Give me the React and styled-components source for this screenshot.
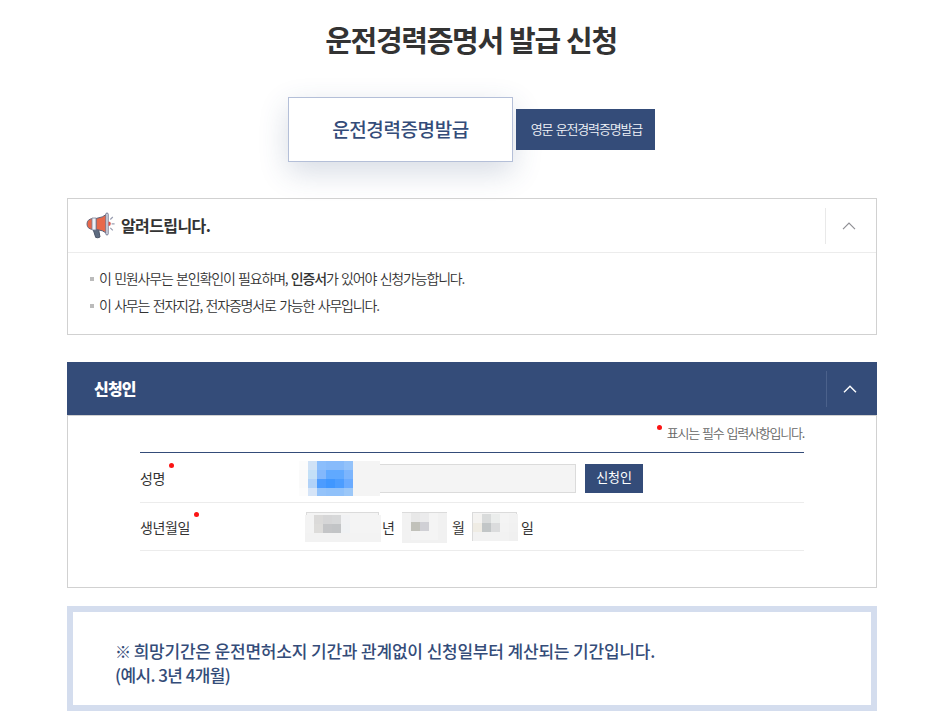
import React from "react";
import styled, { ThemeProvider, createGlobalStyle } from "styled-components";

const theme = {
  colors: {
    navy: "#344c79",
    line: "#d1d1d1",
    lightLine: "#ececec",
    text: "#333",
    red: "#fb1414",
  },
};

const nameMosaic = {
  cols: "9px 9px 9px 9px 9px 9px 27px",
  rows: "9px 9px 9px 8px",
  cells: [
    ["#fcfcfc", "#d0e2f6", "#8bbefc", "#87bbfb", "#87bbfb", "#93c2fa", "#f4f4f4"],
    ["#fafafa", "#c3e0f7", "#83b8fc", "#60a9ff", "#60a9ff", "#7cb5fd", "#f4f4f4"],
    ["#fafafa", "#b1d2f8", "#4c9cff", "#4097ff", "#4c9dff", "#6aabff", "#f4f4f4"],
    ["#fcfcfc", "#d5e4f7", "#94c3fa", "#90c1fa", "#90c1fa", "#9bc7f8", "#f4f4f4"],
  ],
};

const yearMosaic = {
  cols: "9px 9px 9px 9px 9px 31px",
  rows: "9px 9px 9px",
  cells: [
    ["#f3f3f3", "#dbdad9", "#d6d6d7", "#d7d8d9", "#f1f2f4", "#f4f4f4"],
    ["#f3f3f3", "#dddcda", "#c4c5c7", "#c2c4c6", "#f0f2f4", "#f4f4f4"],
    ["#f2f2f2", "#f2f2f2", "#f2f2f2", "#f2f2f2", "#f2f2f2", "#f3f3f3"],
  ],
};

const monthMosaic = {
  cols: "9px 9px 9px 9px 9px",
  rows: "9px 9px 9px 3px",
  cells: [
    ["#f2f2f2", "#e8e8e8", "#ebebec", "#f4f4f4", "#f1f1f1"],
    ["#f2f2f2", "#c1c1ba", "#d0d0d5", "#f4f4f4", "#f1f1f1"],
    ["#f2f2f2", "#f4f4f4", "#f4f4f4", "#f4f4f4", "#f1f1f1"],
    ["#f1f1f1", "#f1f1f1", "#f1f1f1", "#f1f1f1", "#f1f1f1"],
  ],
};

const dayMosaic = {
  cols: "9px 9px 9px 9px 9px",
  rows: "9px 9px 9px",
  cells: [
    ["#f4f3f1", "#d9dbdb", "#ebedec", "#f4f4f4", "#f2f2f2"],
    ["#efece4", "#c2c6c7", "#dbdcdd", "#f3f3f3", "#f1f1f1"],
    ["#f2f2f2", "#f2f2f2", "#f2f2f2", "#f2f2f2", "#f0f0f0"],
  ],
};

const Mosaic = ({ data, left, top }) => (
  <MosaicGrid $cols={data.cols} $rows={data.rows} $left={left} $top={top}>
    {data.cells.flat().map((color, i) => (
      <i key={i} style={{ background: color }} />
    ))}
  </MosaicGrid>
);

const Chevron = ({ color, width = 1 }) => (
  <svg width="14" height="8" viewBox="0 0 14 8" fill="none">
    <path d="M1 7.2 L7 1.2 L13 7.2" stroke={color} strokeWidth={width} />
  </svg>
);

const Megaphone = () => (
  <svg width="30" height="28" viewBox="0 0 30 28" strokeLinejoin="round">
    <path d="M7 17 h5.5 l1.5 8 q-2 1.4 -4.3 .4 z" fill="#5d6b80" stroke="#4b5468" />
    <path d="M7 6.5 Q1 7 1 12 Q1 17 7 17.5 z" fill="#e8684a" stroke="#67677c" />
    <path d="M10 6.5 Q17 5.5 21 2 V21.500 Q17 18 10 17.500 z" fill="#e8684a" stroke="#5d6076" />
    <rect x="6" y="6" width="4" height="12" fill="#eef0f6" stroke="#7a8096" strokeWidth=".8" />
    <rect x="19.800" y="1" width="2.400" height="22" rx="1.200" fill="#dfe2ec" stroke="#6a6f88" strokeWidth=".9" />
    <path d="M22.500 9.500 q2.300 0 2.300 2.300 t-2.300 2.300 z" fill="#d9534a" />
    <path d="M24.300 7.500 L26.800 5 M25.600 11.800 H28.600 M24.300 15.800 L26.800 18.300" stroke="#9a9eb0" strokeWidth="1.200" fill="none" />
  </svg>
);

const App = () => {
  return (
    <ThemeProvider theme={theme}>
      <GlobalStyle />
      <Page>
        <Title>운전경력증명서 발급 신청</Title>
        <Tabs>
          <ActiveTab>운전경력증명발급</ActiveTab>
          <Tab>영문 운전경력증명발급</Tab>
        </Tabs>

        <Notice>
          <NoticeHead>
            <Megaphone />
            <NoticeTitle>알려드립니다.</NoticeTitle>
            <Toggle $line="#e9e9e9">
              <Chevron color="#8f8f94" width={1.2} />
            </Toggle>
          </NoticeHead>
          <NoticeList>
            <NoticeItem>
              이 민원사무는 본인확인이 필요하며, <b>인증서</b>가 있어야 신청가능합니다.
            </NoticeItem>
            <NoticeItem>
              이 사무는 전자지갑, 전자증명서로 가능한 사무입니다.
            </NoticeItem>
          </NoticeList>
        </Notice>

        <SectionHead>
          <SectionTitle>신청인</SectionTitle>
          <Toggle $line="#4b618b">
            <Chevron color="#fff" width={1.4} />
          </Toggle>
        </SectionHead>
        <SectionBody>
          <Required>
            <Dot />
            표시는 필수 입력사항입니다.
          </Required>
          <Form>
            <Row $height={50}>
              <Label>
                성명
                <Dot />
              </Label>
              <Field $width={271} $drop={2}>
                <Mosaic data={nameMosaic} left={-7} top={-4} />
              </Field>
              <Button>신청인</Button>
            </Row>
            <Row $height={48}>
              <Label>
                생년월일
                <Dot />
              </Label>
              <Field $width={73} $shift={1}>
                <Mosaic data={yearMosaic} left={-2} top={2} />
              </Field>
              <Unit $left={3} $width={20}>년</Unit>
              <Field $width={45}>
                <Mosaic data={monthMosaic} left={-1} top={0} />
              </Field>
              <Unit $left={5} $width={20}>월</Unit>
              <Field $width={45}>
                <Mosaic data={dayMosaic} left={0} top={1} />
              </Field>
              <Unit $left={4} $width={20}>일</Unit>
            </Row>
          </Form>
        </SectionBody>

        <Guide>
          <GuideLine $spacing="-0.23px">
            <Mark>※</Mark> 희망기간은 운전면허소지 기간과 관계없이 신청일부터 계산되는 기간입니다.
          </GuideLine>
          <GuideLine $spacing="-0.65px">(예시. 3년 4개월)</GuideLine>
        </Guide>
      </Page>
    </ThemeProvider>
  );
};

export default App;

const GlobalStyle = createGlobalStyle`
  * {
    box-sizing: border-box;
    margin: 0;
    padding: 0;
  }

  body {
    overflow: hidden;
    background: #fff;
    color: ${theme.colors.text};
    font-family: "Noto Sans CJK KR", sans-serif;
  }

  svg {
    display: block;
    flex: none;
  }
`;

const Page = styled.div`
  display: flex;
  flex-direction: column;
  width: 810px;
  height: 722px;
  margin-left: 67px;
  padding-top: 17px;
`;

const Title = styled.h1`
  height: 80px;
  padding-right: 2px;
  line-height: 44px;
  text-align: center;
  font-size: 29px;
  font-weight: 700;
  letter-spacing: -1.3px;
  word-spacing: 1px;
`;

const Tabs = styled.div`
  display: flex;
  justify-content: center;
  align-items: center;
  gap: 3px;
  height: 65px;
  padding-right: 1px;
`;

const Tab = styled.button`
  width: 139px;
  height: 41px;
  padding: 0 0 2px 2px;
  border: none;
  background: ${({ theme }) => theme.colors.navy};
  color: #f2f4f8;
  font-family: inherit;
  font-size: 13px;
  font-weight: 350;
  letter-spacing: -1.15px;
  word-spacing: 1.5px;
  white-space: nowrap;
`;

const ActiveTab = styled(Tab)`
  width: 225px;
  height: 65px;
  padding: 0 0 2px;
  border: 1px solid #b4bfd8;
  background: #fff;
  box-shadow: 0 10px 30px rgba(52, 76, 121, 0.2);
  color: ${({ theme }) => theme.colors.navy};
  font-size: 19px;
  font-weight: 500;
  letter-spacing: -0.4px;
`;

const Notice = styled.section`
  height: 137px;
  margin-top: 36px;
  border: 1px solid ${({ theme }) => theme.colors.line};
`;

const NoticeHead = styled.div`
  display: flex;
  align-items: center;
  height: 54px;
  padding-left: 18px;
  border-bottom: 1px solid ${({ theme }) => theme.colors.lightLine};
`;

const NoticeTitle = styled.h2`
  padding: 0 0 2px 5px;
  font-size: 16px;
  font-weight: 700;
  letter-spacing: -0.6px;
`;

const Toggle = styled.div`
  display: flex;
  justify-content: center;
  align-items: center;
  width: 51px;
  height: 36px;
  margin-left: auto;
  padding-right: 5px;
  border-left: 1px solid ${({ $line }) => $line};
`;

const NoticeList = styled.ul`
  padding: 12px 22px;
  list-style: none;
`;

const NoticeItem = styled.li`
  height: 27px;
  line-height: 27px;
  font-size: 14px;
  font-weight: 350;
  letter-spacing: -1.18px;
  word-spacing: 1.5px;
  white-space: nowrap;

  b {
    font-weight: 500;
  }

  &::before {
    content: "";
    display: inline-block;
    width: 4px;
    height: 4px;
    margin-right: 5px;
    background: #bbb;
    vertical-align: 3px;
  }
`;

const SectionHead = styled.div`
  display: flex;
  align-items: center;
  flex: none;
  height: 53px;
  margin-top: 27px;
  padding-left: 27px;
  background: ${({ theme }) => theme.colors.navy};
`;

const SectionTitle = styled.h2`
  padding-bottom: 2px;
  color: #fff;
  font-size: 16px;
  font-weight: 900;
  letter-spacing: -0.8px;
`;

const SectionBody = styled.div`
  height: 173px;
  padding: 0 72px;
  border: 1px solid ${({ theme }) => theme.colors.line};
`;

const Dot = styled.i`
  flex: none;
  width: 5px;
  height: 5px;
  border-radius: 50%;
  background: ${({ theme }) => theme.colors.red};
`;

const Required = styled.p`
  display: flex;
  justify-content: flex-end;
  height: 36px;
  line-height: 34px;
  color: #666;
  font-size: 13px;
  font-weight: 350;
  letter-spacing: -1.2px;
  word-spacing: 1.2px;

  ${Dot} {
    margin: 9px 5px 0 0;
  }
`;

const Form = styled.div`
  border-top: 1px solid ${({ theme }) => theme.colors.navy};
`;

const Row = styled.div`
  display: flex;
  align-items: center;
  height: ${({ $height }) => $height}px;
  border-bottom: 1px solid ${({ theme }) => theme.colors.lightLine};
`;

const Label = styled.div`
  display: flex;
  width: 165px;
  font-size: 14px;
  letter-spacing: -0.4px;
  line-height: 20px;

  ${Dot} {
    margin: -5px 0 0 4px;
  }
`;

const Field = styled.div`
  position: relative;
  width: ${({ $width }) => $width}px;
  height: 29px;
  margin-top: ${({ $drop = 0 }) => $drop}px;
  margin-left: ${({ $shift = 0 }) => $shift}px;
  border: 1px solid #dbdbdb;
  background: #f4f4f4;
`;

const MosaicGrid = styled.div`
  position: absolute;
  left: ${({ $left }) => $left}px;
  top: ${({ $top }) => $top}px;
  display: grid;
  grid-template-columns: ${({ $cols }) => $cols};
  grid-template-rows: ${({ $rows }) => $rows};
`;

const Button = styled.button`
  width: 58px;
  height: 29px;
  margin: 2px 0 0 9px;
  padding-bottom: 4px;
  border: none;
  background: ${({ theme }) => theme.colors.navy};
  color: #fff;
  font-family: inherit;
  font-size: 13px;
  font-weight: 400;
  letter-spacing: -0.2px;
`;

const Unit = styled.span`
  width: ${({ $width }) => $width}px;
  margin-left: ${({ $left }) => $left}px;
  font-size: 14px;
`;

const Guide = styled.div`
  flex: none;
  height: 105px;
  margin-top: 18px;
  padding: 27px 42px;
  border: 6px solid #d4ddee;
`;

const GuideLine = styled.p`
  line-height: 24px;
  color: ${({ theme }) => theme.colors.navy};
  font-size: 17px;
  font-weight: 500;
  letter-spacing: ${({ $spacing }) => $spacing};
  word-spacing: 0.3px;
  white-space: nowrap;
`;

const Mark = styled.span`
  margin-right: -1px;
  font-size: 16px;
`;
